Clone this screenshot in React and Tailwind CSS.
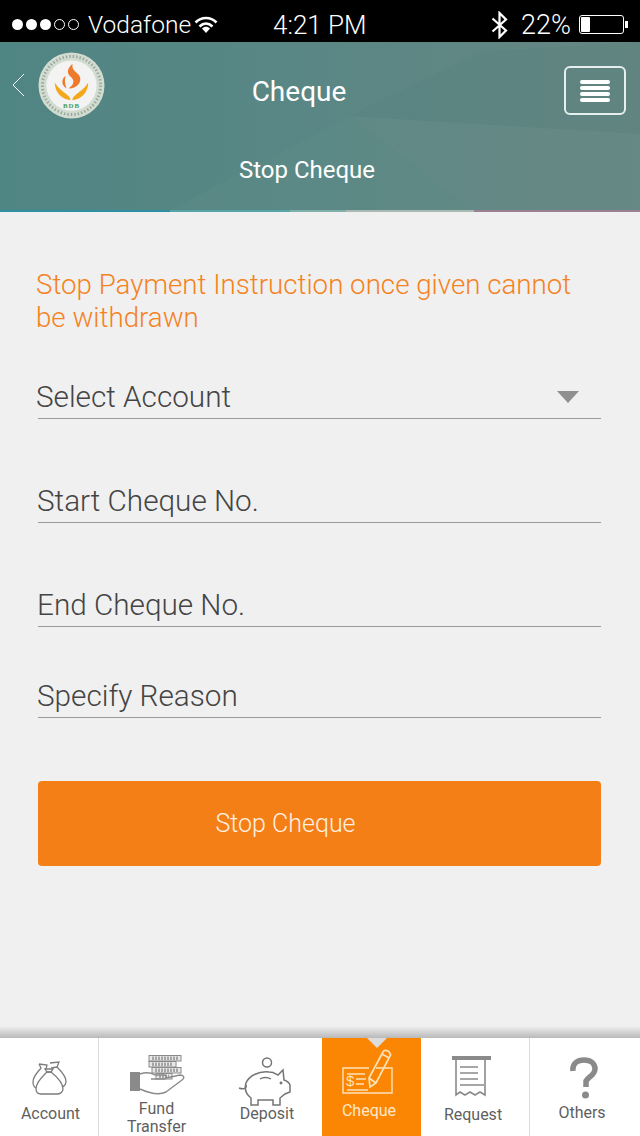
import React from "react";

const Status = () => (
  <div className="h-[42px] pt-[7px] bg-black text-white flex items-center shrink-0 font-['Roboto',sans-serif] font-light text-[26px]">
    <div className="flex items-center gap-[3px] ml-[12px] w-[68px] shrink-0">
      {[1, 1, 1, 0, 0].map((f, i) => (
        <span key={i} className={f ? "w-[11px] h-[11px] rounded-full bg-white" : "w-[11px] h-[11px] rounded-full border border-white"} />
      ))}
    </div>
    <span className="ml-[8px] w-[106px] shrink-0 whitespace-nowrap leading-[30px] text-[24.500px]">Vodafone</span>
    <svg width="24" height="20" viewBox="0 0 24 20" className="shrink-0">
      <path d="M1.500 7.500C7.500 1.500 16.500 1.500 22.500 7.500" fill="none" stroke="#fff" strokeWidth="2.600" />
      <path d="M5.500 11.500C9.500 7.700 14.500 7.700 18.500 11.500" fill="none" stroke="#fff" strokeWidth="2.600" />
      <path d="M8 13.500C10.500 11.300 13.500 11.300 16 13.500L12 18Z" fill="#fff" />
    </svg>
    <span className="ml-[55px] w-[217px] shrink-0 whitespace-nowrap leading-[30px]">4:21 PM</span>
    <svg width="20" height="28" viewBox="0 0 20 28" className="shrink-0">
      <path d="M2.500 7.500L16 19.500L9.500 26V2L16 8.500L2.500 20.500" fill="none" stroke="#fff" strokeWidth="2.200" />
    </svg>
    <span className="ml-[11px] w-[50px] shrink-0 whitespace-nowrap leading-[30px] text-[27px]">22%</span>
    <div className="ml-[8px] w-[45px] h-[19px] border border-white rounded-[3px] p-[1px] shrink-0">
      <div className="w-[9px] h-full bg-white rounded-[1px]" />
    </div>
    <div className="w-[3px] h-[7px] ml-[1px] bg-white shrink-0" />
  </div>
);

const Logo = () => (
  <svg width="67" height="67" viewBox="0 0 68 68" className="shrink-0">
    <circle cx="34" cy="34" r="33.500" fill="#d3dcd0" />
    <circle cx="34" cy="34" r="29.500" fill="none" stroke="#8e9c94" strokeWidth="3" strokeDasharray="1.500 2" opacity="0.8" />
    <circle cx="34" cy="34" r="25.500" fill="#f4f3f3" />
    <path d="M35 12C28 18 30 23 34 26C37 29 37 33 31 37C41 37 45 29 42 24C39 20 34 19 35 12Z" fill="#ee7a2c" />
    <path d="M28 24C23 28 24 34 29 37C27 32 27 28 28 24Z" fill="#ee7a2c" />
    <path d="M17 31C17 41 24 48 33 49C33 43 24 42 17 31Z" fill="#f5a71c" />
    <path d="M51 31C51 41 44 48 35 49C35 43 44 42 51 31Z" fill="#f5a71c" />
    <text x="34" y="57" textAnchor="middle" fontSize="7" fontWeight="700" fontFamily="'Liberation Serif',serif" fill="#4d9a4a" letterSpacing="1">BDB</text>
  </svg>
);

const Header = () => (
  <div className="h-[170px] shrink-0 relative overflow-hidden bg-gradient-to-r from-[#4f8583] via-[#5a8785] to-[#668682] text-white font-['Roboto',sans-serif]">
    <svg className="absolute inset-0" width="640" height="170" viewBox="0 0 640 170">
      <path d="M350 74L640 92V168H470Z" fill="#6b8f8a" opacity="0.3" />
      <path d="M350 74L480 10L640 0V92Z" fill="#557f7d" opacity="0.25" />
      <path d="M170 168L350 74L470 168Z" fill="#5f8d88" opacity="0.3" />
      <rect x="0" y="168" width="170" height="2" fill="#2f8fa3" />
      <rect x="170" y="168" width="120" height="2" fill="#56a5a8" />
      <rect x="290" y="168" width="56" height="2" fill="#7fb0a9" />
      <rect x="346" y="168" width="128" height="2" fill="#a9bab3" />
      <rect x="474" y="168" width="166" height="2" fill="#9a8092" />
    </svg>
    <div className="relative flex items-start pt-[10px] pl-[12px] pr-[14px]">
      <svg width="12" height="24" viewBox="0 0 12 24" className="mt-[21px] shrink-0">
        <path d="M12 1L1 12L12 23" fill="none" stroke="#fff" strokeWidth="1" />
      </svg>
      <div className="ml-[14px] w-[68px] shrink-0"><Logo /></div>
      <div className="w-[386px] shrink-0 text-center text-[28px] leading-[32px] mt-[24px]">Cheque</div>
      <div className="ml-auto mt-[14px] w-[62px] h-[49px] border-2 border-[#e6eeee] rounded-[6px] flex flex-col items-center justify-center gap-[2px]">
        {[0, 1, 2, 3].map((i) => (<span key={i} className="w-[30px] h-[4px] bg-white rounded-[2px]" />))}
      </div>
    </div>
    <div className="relative w-[614px] text-center text-[24px] leading-[30px] mt-[36px]">Stop Cheque</div>
  </div>
);

const Field = ({ label, mt, arrow, textClass = "-ml-[1px]" }) => (
  <div className={`${mt} ml-[38px] w-[563px] h-[40px] border-b border-[#9a9a9a] flex items-center`}>
    <span className={`text-[29.700px] leading-[40px] font-light text-[#444] whitespace-nowrap -mt-[4px] ${textClass}`}>{label}</span>
    {arrow && <div className="ml-auto mr-[22px] w-0 h-0 border-l-[11px] border-r-[11px] border-t-[12px] border-l-transparent border-r-transparent border-t-[#8f8f8f] -mt-[4px]" />}
  </div>
);

const Tab = ({ w, label, active, icon, labelClass = "", iconClass = "" }) => (
  <div className={`${w} h-full shrink-0 flex flex-col items-center ${active ? "bg-[#fb8604] text-[#fde9c8]" : "text-[#5f5f5f]"}`}>
    <div className={iconClass}>{icon}</div>
    <div className={`text-center text-[16px] leading-[18px] ${labelClass}`}>{label}</div>
  </div>
);

const Stack = ({ x, y, w, h }) => (
  <g>
    <rect x={x} y={y} width={w} height={h} fill="#e8e8e8" stroke="#8a8a8a" />
    <path d={`M${x + 3} ${y + h / 2}H${x + w - 3}`} stroke="#a5a5a5" strokeWidth={h - 2} strokeDasharray="2 1" fill="none" />
  </g>
);

const I = {
  account: (
    <svg width="35" height="35" viewBox="0 0 35 35" fill="none" stroke="#7c7c7c" strokeWidth="1.300">
      <path d="M7 3l8 1-1 4M7 3l2 4C6 11 1 15 1 21c0 3 1 5 3 6" />
      <path d="M18 2l9-1-2 5" />
      <path d="M19 7l6-1c4 4 9 9 9 14 0 3-1 5-4 6" />
      <path d="M13 8h8l-2 3h-4z" />
      <path d="M15 11C11 15 4 21 4 28c0 3 2 5 5 5h16c3 0 6-2 6-5 0-7-7-13-12-17z" />
    </svg>
  ),
  fund: (
    <svg width="56" height="42" viewBox="0 0 56 42">
      <Stack x={19} y={0.500} w={32} h={5.500} />
      <Stack x={19} y={6.500} w={27} h={5.500} />
      <Stack x={22} y={12.500} w={29} h={5.500} />
      <Stack x={26} y={18.500} w={16} h={5.500} />
      <rect x="0" y="17" width="10" height="19" fill="#8a8a8a" />
      <path d="M10 19c6-2 10-2 15 1h9c3 0 3 4 0 4h-13M36 23l14-3c4 0 5 3 2 5L36 37c-6 3-15 2-26-3" fill="none" stroke="#8a8a8a" strokeWidth="1.400" />
    </svg>
  ),
  deposit: (
    <svg width="54" height="50" viewBox="0 0 54 50" fill="none" stroke="#757575" strokeWidth="1.500">
      <circle cx="29" cy="5.500" r="4.500" />
      <path d="M1 31c5 2 8 0 7-3" />
      <path d="M8 26c3-7 12-12 23-11 5 0 7 2 9 3l5-5 1 10c3 1 5 2 6 5v7l-5 2-5 4v7h-7v-5H20v5h-7v-7c-4-3-7-8-5-15z" />
      <path d="M22 22c3-2 8-2 11 0" />
      <circle cx="43" cy="26" r="0.700" fill="#757575" />
    </svg>
  ),
  cheque: (
    <svg width="52" height="48" viewBox="0 0 52 48" fill="none" stroke="#fde3ba" strokeWidth="1.400">
      <path d="M34 19h16v25H1V19h26" />
      <text x="4" y="37" fontSize="15" fill="#fde3ba" stroke="none" fontFamily="'Liberation Sans',sans-serif">$</text>
      <path d="M5 25h18M14 30h10M14 35h8M5 41h21" />
      <path d="M28 38l-1-9L41 3c1-2 3-2 5-1l1 1c1 1 2 3 1 4L34 34zM27 29l7 5M40 5l7 4" strokeWidth="1.700" />
    </svg>
  ),
  request: (
    <svg width="40" height="41" viewBox="0 0 40 41" fill="none">
      <rect x="0" y="0" width="39" height="4" fill="#8a8a8a" />
      <path d="M4 4v35l4-3 5 3 5-3 5 3 5-3 5 3V4" stroke="#8a8a8a" strokeWidth="1.600" />
      <path d="M8 11h18M8 17h18M8 23h18M8 29h24" stroke="#8a8a8a" strokeWidth="1.400" />
    </svg>
  ),
  others: (
    <svg width="28" height="42" viewBox="0 0 28 42" fill="none">
      <path d="M3 14C2 6 8 3 14 3c7 0 11 4 11 9 0 6-7 8-9 12v6" stroke="#8a8a8a" strokeWidth="5.500" />
      <circle cx="15.500" cy="38" r="3.500" fill="#8a8a8a" />
    </svg>
  ),
};

const Nav = () => (
  <div className="shrink-0 h-[110px] flex flex-col">
    <div className="h-[12px] bg-gradient-to-b from-[#f0f0f0] to-[#b9b9b9]" />
    <div className="h-[98px] bg-white flex font-['Roboto',sans-serif] relative">
      <Tab w="w-[99px] border-r border-[#dcdcdc]" label="Account" icon={I.account} iconClass="mt-[23px] h-[35px] mb-[9px]" labelClass="ml-[3px]" />
      <Tab w="w-[111px]" label="Fund Transfer" icon={I.fund} iconClass="mt-[17px] h-[42px] ml-[7px] mb-[2px]" labelClass="w-[80px] mt-[1px] ml-[4px]" />
      <Tab w="w-[112px]" label="Deposit" icon={I.deposit} iconClass="mt-[19px] h-[50px] mr-[2px] mb-[-2px]" labelClass="ml-[2px]" />
      <Tab w="w-[99px]" active label="Cheque" icon={I.cheque} iconClass="mt-[11px] h-[48px] mb-[5px] mr-[8px]" labelClass="mr-[5px]" />
      <Tab w="w-[109px] border-r border-[#dcdcdc]" label="Request" icon={I.request} iconClass="mt-[18px] h-[41px] mb-[9px] mr-[6px]" labelClass="mr-[4px]" />
      <Tab w="flex-1" label="Others" icon={I.others} iconClass="mt-[19px] h-[42px] mb-[5px] mr-[2px]" labelClass="mr-[6px]" />
      <div className="absolute left-[367px] top-0 w-0 h-0 border-l-[10px] border-r-[10px] border-t-[10px] border-l-transparent border-r-transparent border-t-[#dcdcdc]" />
    </div>
  </div>
);

export default function App() {
  return (
    <div className="w-[640px] h-[1136px] flex flex-col bg-[#f0f0f0] overflow-hidden font-['Roboto',sans-serif]">
      <Status />
      <Header />
      <div className="flex-1 flex flex-col">
        <p className="mt-[56px] ml-[36px] w-[550px] text-[27.700px] leading-[33px] font-light text-[#f5821f]">Stop Payment Instruction once given cannot be withdrawn</p>
        <Field label="Select Account" mt="mt-[45px]" arrow textClass="-ml-[2px]" />
        <Field label="Start Cheque No." mt="mt-[64px]" />
        <Field label="End Cheque No." mt="mt-[64px]" />
        <Field label="Specify Reason" mt="mt-[51px]" />
        <div className="mt-[63px] ml-[38px] w-[563px] h-[85px] bg-[#f57f17] rounded-[4px] flex items-center justify-center pr-[68px] text-[25px] font-light text-[#fdf0e0]">
          Stop Cheque
        </div>
      </div>
      <Nav />
    </div>
  );
}
